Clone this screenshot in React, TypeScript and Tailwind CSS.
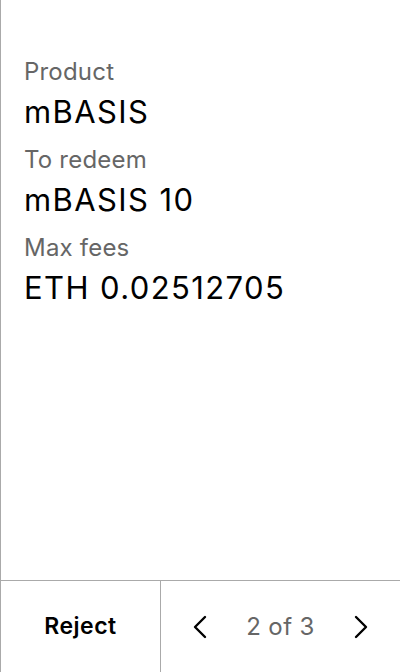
const rows = [
  { label: "Product", value: "mBASIS" },
  { label: "To redeem", value: "mBASIS 10" },
  { label: "Max fees", value: "ETH 0.02512705" },
];

function Chevron({ dir }: { dir: "left" | "right" }) {
  return (
    <svg width="14" height="24" viewBox="0 0 14 24" fill="none">
      <polyline
        points={dir === "left" ? "12,2 2,12 12,22" : "2,2 12,12 2,22"}
        stroke="#000"
        strokeWidth="2.4"
        strokeLinecap="round"
        strokeLinejoin="round"
      />
    </svg>
  );
}

export default function App() {
  return (
    <div className="flex flex-col w-[400px] h-[672px] bg-white border-l border-[#aaaaaa] font-['Inter',sans-serif]">
      <div className="flex-1 flex flex-col gap-[16px] pl-[23px] pt-[58px]">
        {rows.map((r) => (
          <div key={r.label} className="flex flex-col gap-[8px]">
            <div className="text-[24px] leading-[28px] tracking-[0.2px] text-[#666666]">{r.label}</div>
            <div className="text-[31px] leading-[36px] tracking-[1.4px] text-black">{r.value}</div>
          </div>
        ))}
      </div>
      <div className="flex h-[92px] border-t border-[#aaaaaa]">
        <button className="w-[160px] flex items-center justify-center border-r border-[#aaaaaa] text-[23px] font-semibold tracking-[0.5px] text-black">
          Reject
        </button>
        <div className="flex-1 flex items-center justify-between px-[32px]">
          <Chevron dir="left" />
          <span className="text-[24px] tracking-[0.4px] text-[#666666]">2 of 3</span>
          <Chevron dir="right" />
        </div>
      </div>
    </div>
  );
}
